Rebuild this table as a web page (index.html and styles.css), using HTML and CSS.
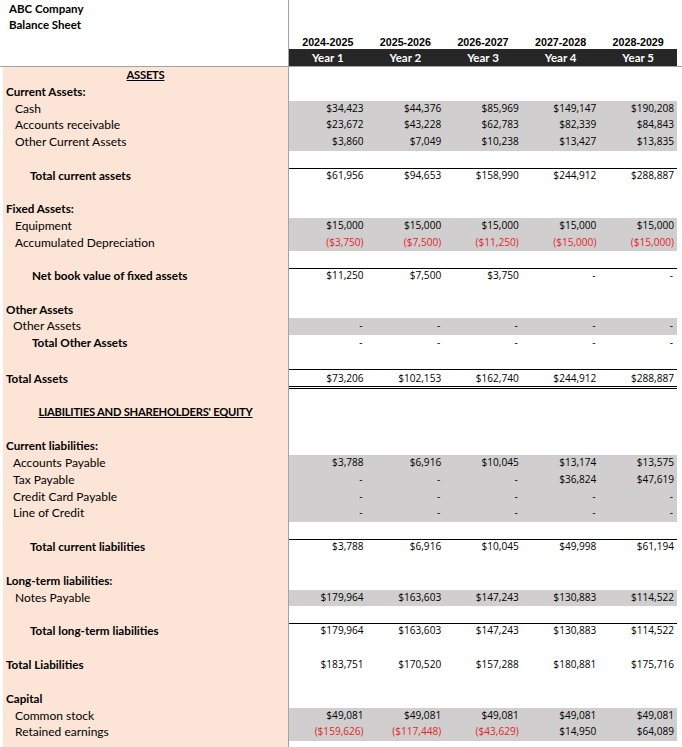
FILE: index.html
```html
<!DOCTYPE html>
<html lang="en">
<head>
<meta charset="utf-8">
<title>Balance Sheet</title>
<link rel="stylesheet" href="styles.css">
</head>
<body>
<div class="sheet">
  <div class="head">
    <div class="row hr1"><div class="hlbl">ABC Company</div></div>
    <div class="row hr2"><div class="hlbl">Balance Sheet</div></div>
    <div class="row hr3"><div class="hlbl"></div><div class="yr">2024-2025</div><div class="yr">2025-2026</div><div class="yr">2026-2027</div><div class="yr">2027-2028</div><div class="yr">2028-2029</div></div>
    <div class="row hr4"><div class="hlbl"></div><div class="yn">Year 1</div><div class="yn">Year 2</div><div class="yn">Year 3</div><div class="yn">Year 4</div><div class="yn">Year 5</div></div>
  </div>

  <div class="sec sec-assets">
    <div class="row"><div class="lbl b caps center"><u>ASSETS</u></div></div>
    <div class="row"><div class="lbl b i0">Current Assets:</div></div>
    <div class="row shade"><div class="lbl i2">Cash</div><div class="num">$34,423</div><div class="num">$44,376</div><div class="num">$85,969</div><div class="num">$149,147</div><div class="num">$190,208</div></div>
    <div class="row shade"><div class="lbl i2">Accounts receivable</div><div class="num">$23,672</div><div class="num">$43,228</div><div class="num">$62,783</div><div class="num">$82,339</div><div class="num">$84,843</div></div>
    <div class="row shade"><div class="lbl i2">Other Current Assets</div><div class="num">$3,860</div><div class="num">$7,049</div><div class="num">$10,238</div><div class="num">$13,427</div><div class="num">$13,835</div></div>
    <div class="row"><div class="lbl"></div></div>
    <div class="row total"><div class="lbl b i3">Total current assets</div><div class="num">$61,956</div><div class="num">$94,653</div><div class="num">$158,990</div><div class="num">$244,912</div><div class="num">$288,887</div></div>
    <div class="row"><div class="lbl"></div></div>
    <div class="row"><div class="lbl b i0">Fixed Assets:</div></div>
    <div class="row shade"><div class="lbl i2">Equipment</div><div class="num">$15,000</div><div class="num">$15,000</div><div class="num">$15,000</div><div class="num">$15,000</div><div class="num">$15,000</div></div>
    <div class="row shade"><div class="lbl i2">Accumulated Depreciation</div><div class="num neg">($3,750)</div><div class="num neg">($7,500)</div><div class="num neg">($11,250)</div><div class="num neg">($15,000)</div><div class="num neg">($15,000)</div></div>
    <div class="row"><div class="lbl"></div></div>
    <div class="row total"><div class="lbl b i4">Net book value of fixed assets</div><div class="num">$11,250</div><div class="num">$7,500</div><div class="num">$3,750</div><div class="num dash">-</div><div class="num dash">-</div></div>
    <div class="row"><div class="lbl"></div></div>
    <div class="row"><div class="lbl b i0">Other Assets</div></div>
    <div class="row shade"><div class="lbl i1">Other Assets</div><div class="num dash">-</div><div class="num dash">-</div><div class="num dash">-</div><div class="num dash">-</div><div class="num dash">-</div></div>
    <div class="row"><div class="lbl b i4">Total Other Assets</div><div class="num dash">-</div><div class="num dash">-</div><div class="num dash">-</div><div class="num dash">-</div><div class="num dash">-</div></div>
    <div class="row"><div class="lbl"></div></div>
    <div class="row grand"><div class="lbl b i0">Total Assets</div><div class="num">$73,206</div><div class="num">$102,153</div><div class="num">$162,740</div><div class="num">$244,912</div><div class="num">$288,887</div></div>
  </div>

  <div class="sec sec-liab">
    <div class="row"><div class="lbl"></div></div>
    <div class="row"><div class="lbl b caps center"><u>LIABILITIES AND SHAREHOLDERS' EQUITY</u></div></div>
    <div class="row"><div class="lbl"></div></div>
    <div class="row"><div class="lbl b i0">Current liabilities:</div></div>
    <div class="row shade"><div class="lbl i1">Accounts Payable</div><div class="num">$3,788</div><div class="num">$6,916</div><div class="num">$10,045</div><div class="num">$13,174</div><div class="num">$13,575</div></div>
    <div class="row shade"><div class="lbl i1">Tax Payable</div><div class="num dash">-</div><div class="num dash">-</div><div class="num dash">-</div><div class="num">$36,824</div><div class="num">$47,619</div></div>
    <div class="row shade"><div class="lbl i1">Credit Card Payable</div><div class="num dash">-</div><div class="num dash">-</div><div class="num dash">-</div><div class="num dash">-</div><div class="num dash">-</div></div>
    <div class="row shade"><div class="lbl i1">Line of Credit</div><div class="num dash">-</div><div class="num dash">-</div><div class="num dash">-</div><div class="num dash">-</div><div class="num dash">-</div></div>
    <div class="row"><div class="lbl"></div></div>
    <div class="row total"><div class="lbl b i3">Total current liabilities</div><div class="num">$3,788</div><div class="num">$6,916</div><div class="num">$10,045</div><div class="num">$49,998</div><div class="num">$61,194</div></div>
    <div class="row"><div class="lbl"></div></div>
    <div class="row"><div class="lbl b i0">Long-term liabilities:</div></div>
    <div class="row shade"><div class="lbl i2">Notes Payable</div><div class="num">$179,964</div><div class="num">$163,603</div><div class="num">$147,243</div><div class="num">$130,883</div><div class="num">$114,522</div></div>
    <div class="row"><div class="lbl"></div></div>
    <div class="row total"><div class="lbl b i3">Total long-term liabilities</div><div class="num">$179,964</div><div class="num">$163,603</div><div class="num">$147,243</div><div class="num">$130,883</div><div class="num">$114,522</div></div>
    <div class="row"><div class="lbl"></div></div>
    <div class="row"><div class="lbl b i0">Total Liabilities</div><div class="num">$183,751</div><div class="num">$170,520</div><div class="num">$157,288</div><div class="num">$180,881</div><div class="num">$175,716</div></div>
    <div class="row"><div class="lbl"></div></div>
    <div class="row"><div class="lbl b i0">Capital</div></div>
    <div class="row shade"><div class="lbl i2">Common stock</div><div class="num">$49,081</div><div class="num">$49,081</div><div class="num">$49,081</div><div class="num">$49,081</div><div class="num">$49,081</div></div>
    <div class="row shade"><div class="lbl i2">Retained earnings</div><div class="num neg">($159,626)</div><div class="num neg">($117,448)</div><div class="num neg">($43,629)</div><div class="num">$14,950</div><div class="num">$64,089</div></div>
    <div class="row"><div class="lbl"></div></div>
  </div>
</div>
</body>
</html>
```

FILE: styles.css
```css
* {
  box-sizing: border-box;
}

html,
body {
  margin: 0;
  padding: 0;
  background: #ffffff;
}

body {
  font-family: Lato, "Open Sans", sans-serif;
  color: #000000;
  overflow: hidden;
}

.sheet {
  width: 682px;
}

.row {
  display: grid;
  grid-template-columns: 289px repeat(5, 77.6px);
  height: 16.75px;
}

.sec-liab .row {
  height: 16.85px;
}

/* header */
.head {
  border-bottom: 1px solid #a3a3a3;
}

.head .hr1 { height: 17px; }
.head .hr2 { height: 16px; }
.head .hr3 { height: 16px; }
.head .hr4 { height: 17px; }

.hlbl {
  border-right: 1px solid #a3a3a3;
  padding-left: 9px;
  font-weight: 700;
  font-size: 11.5px;
  line-height: 17px;
  white-space: nowrap;
}

.hr1 .hlbl {
  padding-top: 1px;
  line-height: 16px;
}

.hr2 .hlbl {
  line-height: 16px;
}

.yr {
  font-family: "Liberation Sans", Arial, sans-serif;
  font-weight: 700;
  font-size: 10.7px;
  line-height: 16px;
  padding-top: 1px;
  text-align: center;
  white-space: nowrap;
}

.yn {
  background: #262626;
  color: #ffffff;
  font-weight: 700;
  font-size: 11.5px;
  line-height: 17px;
  text-align: center;
  white-space: nowrap;
}

/* body label column */
.lbl {
  margin-left: 3px;
  background: #fce4d6;
  border-right: 1px solid #a3a3a3;
  font-size: 12px;
  line-height: 15px;
  white-space: nowrap;
}

.b {
  font-weight: 700;
  font-size: 11.7px;
}

.caps {
  font-size: 11.2px;
  letter-spacing: -0.25px;
}

.center {
  text-align: center;
}

.i0 { padding-left: 3px; }
.i1 { padding-left: 10px; }
.i2 { padding-left: 12px; }
.i3 { padding-left: 27px; }
.i4 { padding-left: 29px; }

/* data cells */
.num {
  font-family: "Open Sans", Lato, sans-serif;
  font-size: 10.1px;
  line-height: 15px;
  text-align: right;
  padding-right: 3px;
  white-space: nowrap;
}

.num.dash {
  padding-right: 4px;
}

.neg {
  color: #e2262b;
}

.shade .num {
  background: #d0cece;
}

.total .num {
  box-shadow: inset 0 1px 0 #000000;
}

/* Total Assets: taller row, text sits on the bottom like a spreadsheet cell */
.row.grand {
  height: 19px;
}

.grand .lbl,
.grand .num {
  padding-top: 2px;
}

.grand .num {
  box-shadow: inset 0 1px 0 #000000;
  border-bottom: 3px double #000000;
}
```
